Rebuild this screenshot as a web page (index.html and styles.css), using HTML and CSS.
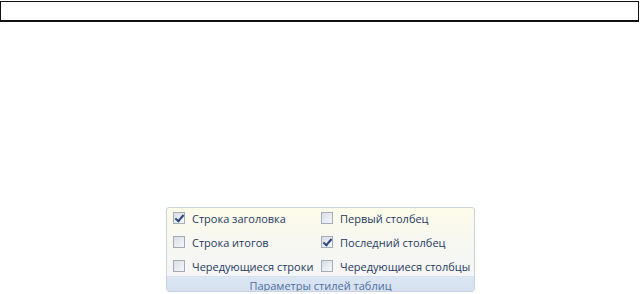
FILE: index.html
```html
<!DOCTYPE html>
<html lang="ru">
  <head>
    <meta charset="UTF-8" />
    <title>Параметры стилей таблиц</title>
    <link rel="stylesheet" href="styles.css">
  </head>
  <body>
    <div class="top-bar"></div>

    <section class="ribbon-group">
      <div class="options">
        <label class="option"><span class="box checked"></span>Строка заголовка</label>
        <label class="option"><span class="box"></span>Первый столбец</label>
        <label class="option"><span class="box"></span>Строка итогов</label>
        <label class="option"><span class="box checked"></span>Последний столбец</label>
        <label class="option"><span class="box"></span>Чередующиеся строки</label>
        <label class="option"><span class="box"></span>Чередующиеся столбцы</label>
      </div>
      <div class="group-title">Параметры стилей таблиц</div>
    </section>
  </body>
</html>
```

FILE: styles.css
```css
* {
  margin: 0;
  padding: 0;
  box-sizing: border-box;
}

body {
  background-color: white;
  font-family: "Open Sans", "DejaVu Sans", sans-serif;
  width: 640px;
  height: 294px;
  overflow: hidden;
}

.top-bar {
  width: 639px;
  height: 21px;
  margin-top: 1px;
  border: 1px solid #111;
  border-bottom-width: 2px;
}

.ribbon-group {
  width: 309px;
  height: 85px;
  margin: 185px 0 0 166px;
  border: 1px solid #c9d3df;
  border-radius: 3px;
  background: linear-gradient(#fdfbe9, #f7f7f3 45%, #f4f5f6);
  display: flex;
  flex-direction: column;
  overflow: hidden;
}

.options {
  flex: 1;
  display: grid;
  grid-template-columns: 148px 1fr;
  grid-auto-rows: 20px;
  row-gap: 4px;
  padding: 0 0 0 6px;
}

.option {
  display: flex;
  align-items: center;
  gap: 7px;
  font-size: 11px;
  color: #1f3a5f;
  white-space: nowrap;
}

.box {
  width: 12px;
  height: 12px;
  border: 1px solid #a3adba;
  background: linear-gradient(135deg, #d9dee5, #f6f7f9);
  position: relative;
}

.box.checked::after {
  content: "";
  position: absolute;
  left: 3px;
  top: 0px;
  width: 3px;
  height: 7px;
  border: solid #2e4585;
  border-width: 0 2px 2px 0;
  transform: rotate(40deg);
}

.group-title {
  height: 18px;
  line-height: 17px;
  text-align: center;
  font-size: 11px;
  color: #4e6f9e;
  background: linear-gradient(#dbe6f4, #d4e0f0);
  border-top: 1px solid #d6e0ec;
}
```
